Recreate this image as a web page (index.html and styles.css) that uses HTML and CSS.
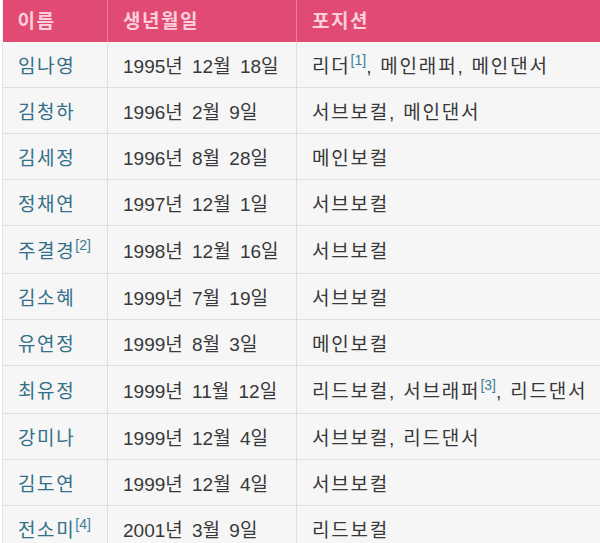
FILE: index.html
```html
<!DOCTYPE html>
<html lang="ko">
<head>
<meta charset="utf-8">
<link rel="stylesheet" href="styles.css">
</head>
<body>
<table class="members">
  <colgroup>
    <col class="col-name">
    <col class="col-date">
    <col class="col-pos">
  </colgroup>
  <thead>
    <tr class="head">
      <th class="h-name">이름</th>
      <th class="h-date">생년월일</th>
      <th class="h-pos">포지션</th>
    </tr>
  </thead>
  <tbody>
    <tr><td class="name">임나영</td><td class="date">1995년 12월 18일</td><td class="pos">리더<sup class="ref">[1]</sup>, 메인래퍼, 메인댄서</td></tr>
    <tr><td class="name">김청하</td><td class="date">1996년 2월 9일</td><td class="pos">서브보컬, 메인댄서</td></tr>
    <tr><td class="name">김세정</td><td class="date">1996년 8월 28일</td><td class="pos">메인보컬</td></tr>
    <tr><td class="name">정채연</td><td class="date">1997년 12월 1일</td><td class="pos">서브보컬</td></tr>
    <tr class="tall"><td class="name">주결경<sup class="ref">[2]</sup></td><td class="date">1998년 12월 16일</td><td class="pos">서브보컬</td></tr>
    <tr><td class="name">김소혜</td><td class="date">1999년 7월 19일</td><td class="pos">서브보컬</td></tr>
    <tr><td class="name">유연정</td><td class="date">1999년 8월 3일</td><td class="pos">메인보컬</td></tr>
    <tr class="tall"><td class="name">최유정</td><td class="date">1999년 11월 12일</td><td class="pos">리드보컬, 서브래퍼<sup class="ref">[3]</sup>, 리드댄서</td></tr>
    <tr><td class="name">강미나</td><td class="date">1999년 12월 4일</td><td class="pos">서브보컬, 리드댄서</td></tr>
    <tr><td class="name">김도연</td><td class="date">1999년 12월 4일</td><td class="pos">서브보컬</td></tr>
    <tr><td class="name">전소미<sup class="ref">[4]</sup></td><td class="date">2001년 3월 9일</td><td class="pos">리드보컬</td></tr>
  </tbody>
</table>
</body>
</html>
```
FILE: styles.css
```css
html, body {
  margin: 0;
  padding: 0;
  background: #ffffff;
  overflow: hidden;
}

body {
  font-family: "Liberation Sans", "Noto Sans CJK KR", sans-serif;
  font-size: 19px;
  color: #383838;
}

.members {
  border-collapse: collapse;
  margin-left: 2px;
  width: 620px;
  table-layout: fixed;
  background: #f6f6f6;
}

.col-name { width: 105px; }
.col-date { width: 189px; }

.head {
  height: 42px;
  background: #e14b73;
}

.head th {
  text-align: left;
  font-weight: bold;
  color: #fbd0db;
  padding: 0 0 4px 15px;
  border-right: 1px solid #ee7b98;
  vertical-align: middle;
  letter-spacing: 1.5px;
  white-space: nowrap;
}

.members td {
  height: 41px;
  padding: 4px 0 0 15px;
  border: 1px solid #dedede;
  border-top: 0;
  vertical-align: middle;
  white-space: nowrap;
  line-height: 24px;
}

.members td:first-child {
  border-left: 1px solid #e4e4e4;
}

.members tr.tall td {
  height: 43px;
}

.members td.name {
  color: #336f88;
  letter-spacing: 1.6px;
}

.members td.date {
  word-spacing: 4px;
}

.members td.pos {
  letter-spacing: 1.8px;
}

.ref {
  font-size: 14px;
  color: #3c7c96;
  vertical-align: 8px;
  line-height: 0;
  letter-spacing: 0;
}
```
